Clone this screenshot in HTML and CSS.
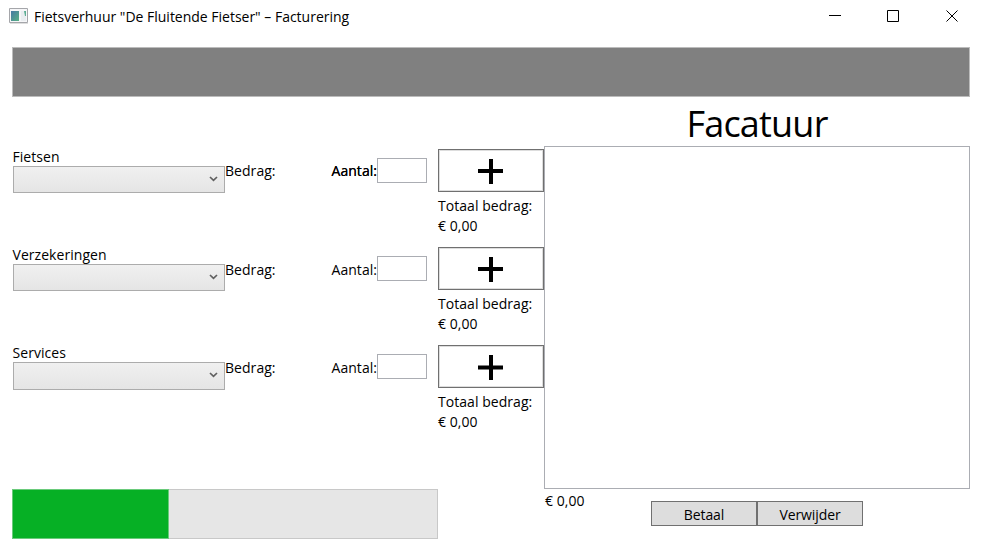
FILE: index.html
```html
<!DOCTYPE html>
<html lang="nl">
<head>
<meta charset="utf-8">
<title>Facturering</title>
<link rel="stylesheet" href="styles.css">
</head>
<body>
<header class="titlebar">
  <svg class="app-icon" width="19" height="16" viewBox="0 0 19 16"><defs><linearGradient id="g" x1="0" y1="0" x2="1" y2="1"><stop offset="0" stop-color="#4678a4"/><stop offset="1" stop-color="#58b184"/></linearGradient></defs><path d="M.5 .5h18v14H.5z" fill="#f6f6f8" stroke="#a5a6aa"/><path d="M1 15.500h18" stroke="#dedede"/><path d="M2 3h8v10H2z" fill="url(#g)"/><path d="M12 3h5v10h-5z" fill="#e9edf0"/><path d="M15 3h2v5h-1z" fill="#5cae93"/></svg>
  <h1 class="title"><span>Fietsverhuur "De Fluitende Fietser" – Facturering</span></h1>
  <svg class="controls" width="130" height="12" viewBox="0 0 130 12" fill="none" stroke="#000"><path d="M0 5.500h12M58.500 .5h11v11h-11z"/><path d="M117.500 .5l11 11M128.500 .5l-11 11"/></svg>
</header>
<div class="banner"></div>
<main class="content">
  <section class="left">
    <div class="row first">
      <div class="product"><label>Fietsen</label><div class="combo"><svg width="9" height="6" viewBox="0 0 9 6"><path d="M1 1l3.500 3.300L8 1" fill="none" stroke="#606060" stroke-width="1.700"/></svg></div></div>
      <span class="amount">Bedrag:</span>
      <div class="quantity"><span class="qlabel">Aantal:</span><input class="qty"></div>
      <div class="add"><button class="plus"><svg width="25" height="25" viewBox="0 0 25 25"><path d="M0 12h25M13 0v25" stroke="#000" stroke-width="4"/></svg></button><p>Totaal bedrag:</p><p class="euro">€ 0,00</p></div>
    </div>
    <div class="row">
      <div class="product"><label>Verzekeringen</label><div class="combo"><svg width="9" height="6" viewBox="0 0 9 6"><path d="M1 1l3.500 3.300L8 1" fill="none" stroke="#606060" stroke-width="1.700"/></svg></div></div>
      <span class="amount">Bedrag:</span>
      <div class="quantity"><span class="qlabel">Aantal:</span><input class="qty"></div>
      <div class="add"><button class="plus"><svg width="25" height="25" viewBox="0 0 25 25"><path d="M0 12h25M13 0v25" stroke="#000" stroke-width="4"/></svg></button><p>Totaal bedrag:</p><p class="euro">€ 0,00</p></div>
    </div>
    <div class="row">
      <div class="product"><label>Services</label><div class="combo tall"><svg width="9" height="6" viewBox="0 0 9 6"><path d="M1 1l3.500 3.300L8 1" fill="none" stroke="#606060" stroke-width="1.700"/></svg></div></div>
      <span class="amount">Bedrag:</span>
      <div class="quantity"><span class="qlabel">Aantal:</span><input class="qty"></div>
      <div class="add"><button class="plus"><svg width="25" height="25" viewBox="0 0 25 25"><path d="M0 12.500h25M13 0v25" stroke="#000" stroke-width="4"/></svg></button><p>Totaal bedrag:</p><p class="euro">€ 0,00</p></div>
    </div>
    <div class="progress"><div class="fill"></div></div>
  </section>
  <section class="invoice">
    <h2>Facatuur</h2>
    <div class="list"></div>
    <div class="footer"><span class="total euro">€ 0,00</span><button class="action">Betaal</button><button class="action">Verwijder</button></div>
  </section>
</main>
</body>
</html>
```
FILE: styles.css
```css
* { box-sizing: border-box; }
body { margin: 0; width: 982px; height: 551px; overflow: hidden; background: #fff; color: #000; font: 14px/20px "Open Sans", sans-serif; letter-spacing: 0.05px; }
h1, h2, p { margin: 0; font-weight: 400; }
.titlebar { display: flex; align-items: flex-start; height: 47px; padding: 8px 23px 0 9px; }
.app-icon { margin-right: 6px; }
.title { flex: 1; font-size: 14px; line-height: 18px; letter-spacing: -0.01px; white-space: nowrap; }
.controls { margin-top: 2px; }
.banner { height: 50px; margin: 0 12px; background: #808080; border: 1px solid #bcbcbc; }
.content { display: flex; margin: 0 12px; }
.left { width: 532px; padding-top: 52px; }
.row { display: grid; grid-template-columns: 213px 106px 107px 106px; height: 98px; }
.product label { display: block; height: 17px; padding-left: 0.5px; line-height: 15px; }
.combo { display: flex; justify-content: flex-end; align-items: center; width: 212px; height: 27px; margin-left: 1px; padding: 0 6px 2px 0; border: 1px solid #acacac; background: linear-gradient(#f0f0f0, #e5e5e5); }
.combo.tall { height: 28px; padding-bottom: 3px; }
.amount { padding-top: 13px; }
.first .amount, .first .qlabel { padding-top: 12px; }
.quantity { display: flex; align-items: flex-start; }
.qlabel { width: 46px; padding-top: 13px; padding-left: 0.5px; white-space: nowrap; }
.first .qlabel { text-shadow: 0 0 0 #000; }
.qty { width: 50px; height: 25px; margin: 9px 0 0; padding: 0; border: 1px solid #abadb3; background: #fff; }
.plus { display: flex; align-items: center; justify-content: center; width: 106px; height: 43px; margin: 0 0 4px; padding: 2px 1px 0 0; border: 1px solid #707070; box-shadow: inset 0 0 0 1px #ddd; background: #fff; }
.add p { white-space: nowrap; }
.progress { width: 426px; height: 50px; margin-top: 46px; background: #e6e6e6; border: 1px solid #c8c8c8; }
.fill { width: 157px; height: 50px; margin: -1px; background: #06b025; border: 1px solid #6acb7b; }
.invoice { width: 426px; }
.invoice h2 { height: 49px; padding-top: 2px; text-align: center; font-size: 36px; line-height: 49px; letter-spacing: -0.8px; }
.list { height: 343px; border: 1px solid #abadb3; }
.footer { display: flex; }
.total { width: 107px; padding: 2px 0 0 1px; }
.action { width: 106px; height: 25px; margin-top: 12px; padding: 2px 0 0; border: 1px solid #707070; background: #ddd; color: #000; font: inherit; line-height: 20px; letter-spacing: -0.1px; }
```
